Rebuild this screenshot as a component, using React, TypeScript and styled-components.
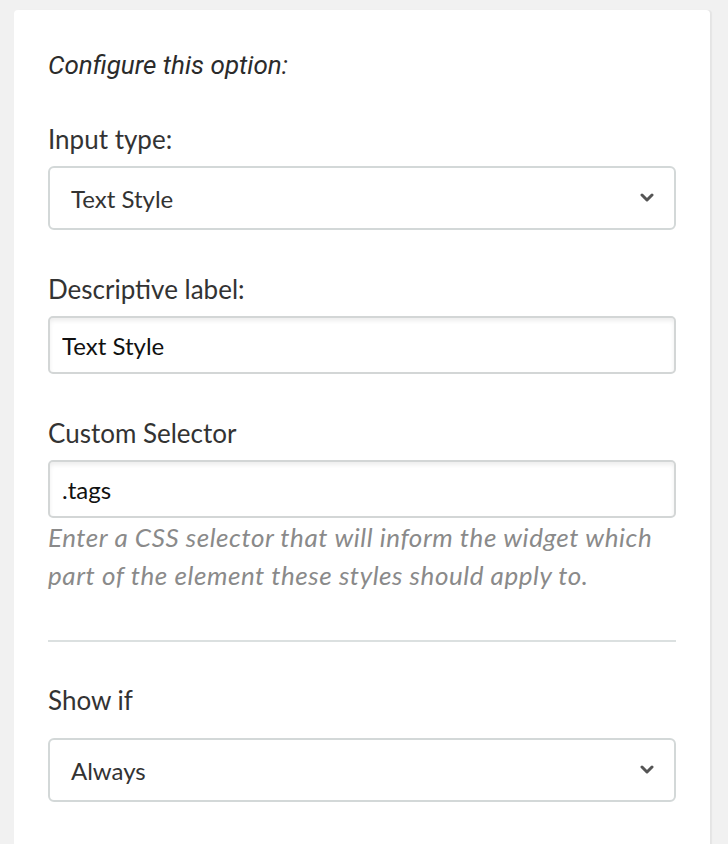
import * as React from 'react';
import styled, { createGlobalStyle } from 'styled-components';

const GlobalStyle = createGlobalStyle`
  html, body {
    margin: 0;
    padding: 0;
    background: #f1f1f1;
  }
  body {
    font-family: Lato, 'Liberation Sans', sans-serif;
    color: #333;
  }
`;

const Card = styled.div`
  box-sizing: border-box;
  margin: 10px 0 0 14px;
  width: 696px;
  min-height: 834px;
  padding: 39px 34px 40px 34px;
  background: #fff;
  border-radius: 4px 4px 0 0;
  box-shadow: 2px 0 1px rgba(0, 0, 0, 0.05);
`;

const Intro = styled.p`
  margin: 0 0 42px;
  font-family: Roboto, 'Liberation Sans', sans-serif;
  font-style: italic;
  font-size: 26px;
  line-height: 32px;
  color: #2b2b2b;
`;

const Field = styled.div`
  display: flex;
  flex-direction: column;
  margin-bottom: 43px;
`;

const Label = styled.label<{ $gap?: number }>`
  font-size: 26px;
  line-height: 32px;
  color: #333;
  margin-bottom: ${({ $gap }) => $gap ?? 11}px;
`;

const SelectBox = styled.div`
  box-sizing: border-box;
  height: 64px;
  display: flex;
  align-items: center;
  justify-content: space-between;
  padding: 0 20px 0 21px;
  border: 2px solid #d3d8d8;
  border-radius: 6px;
  background: #fff;
  font-size: 24px;
  color: #333;
`;

const TextInput = styled.input`
  box-sizing: border-box;
  width: 100%;
  height: 58px;
  padding: 0 12px;
  border: 2px solid #d3d6d6;
  border-radius: 5px;
  background: #fff;
  box-shadow: inset 0 3px 4px rgba(0, 0, 0, 0.07);
  font-family: Lato, 'Liberation Sans', sans-serif;
  font-size: 24px;
  color: #111;
  outline: none;
`;

const Help = styled.p`
  margin: 0;
  font-style: italic;
  font-size: 26px;
  line-height: 38px;
  letter-spacing: 0.55px;
  color: #8a8a8a;
`;

// top margin collapses with the field above, so it has to beat 43px
const Divider = styled.hr`
  margin: 46px 0 42px;
  border: 0;
  border-top: 2px solid #dbe0e0;
`;

function Chevron() {
  return (
    <svg width="14" height="10" viewBox="0 0 14 10">
      <polyline points="2,2 7,7 12,2" fill="none" stroke="#555" strokeWidth="3" strokeLinecap="round" strokeLinejoin="round" />
    </svg>
  );
}

function Select({ value }: { value: string }) {
  return (
    <SelectBox>
      <span>{value}</span>
      <Chevron />
    </SelectBox>
  );
}

export default function App() {
  return (
    <>
      <GlobalStyle />
      <Card>
        <Intro>Configure this option:</Intro>
        <Field>
          <Label>Input type:</Label>
          <Select value="Text Style" />
        </Field>
        <Field>
          <Label>Descriptive label:</Label>
          <TextInput readOnly value="Text Style" />
        </Field>
        <Field>
          <Label>Custom Selector</Label>
          <TextInput readOnly value=".tags" />
          <Help>
            Enter a CSS selector that will inform the widget which part of the element these styles should apply to.
          </Help>
        </Field>
        <Divider />
        <Field>
          <Label $gap={22}>Show if</Label>
          <Select value="Always" />
        </Field>
      </Card>
    </>
  );
}
